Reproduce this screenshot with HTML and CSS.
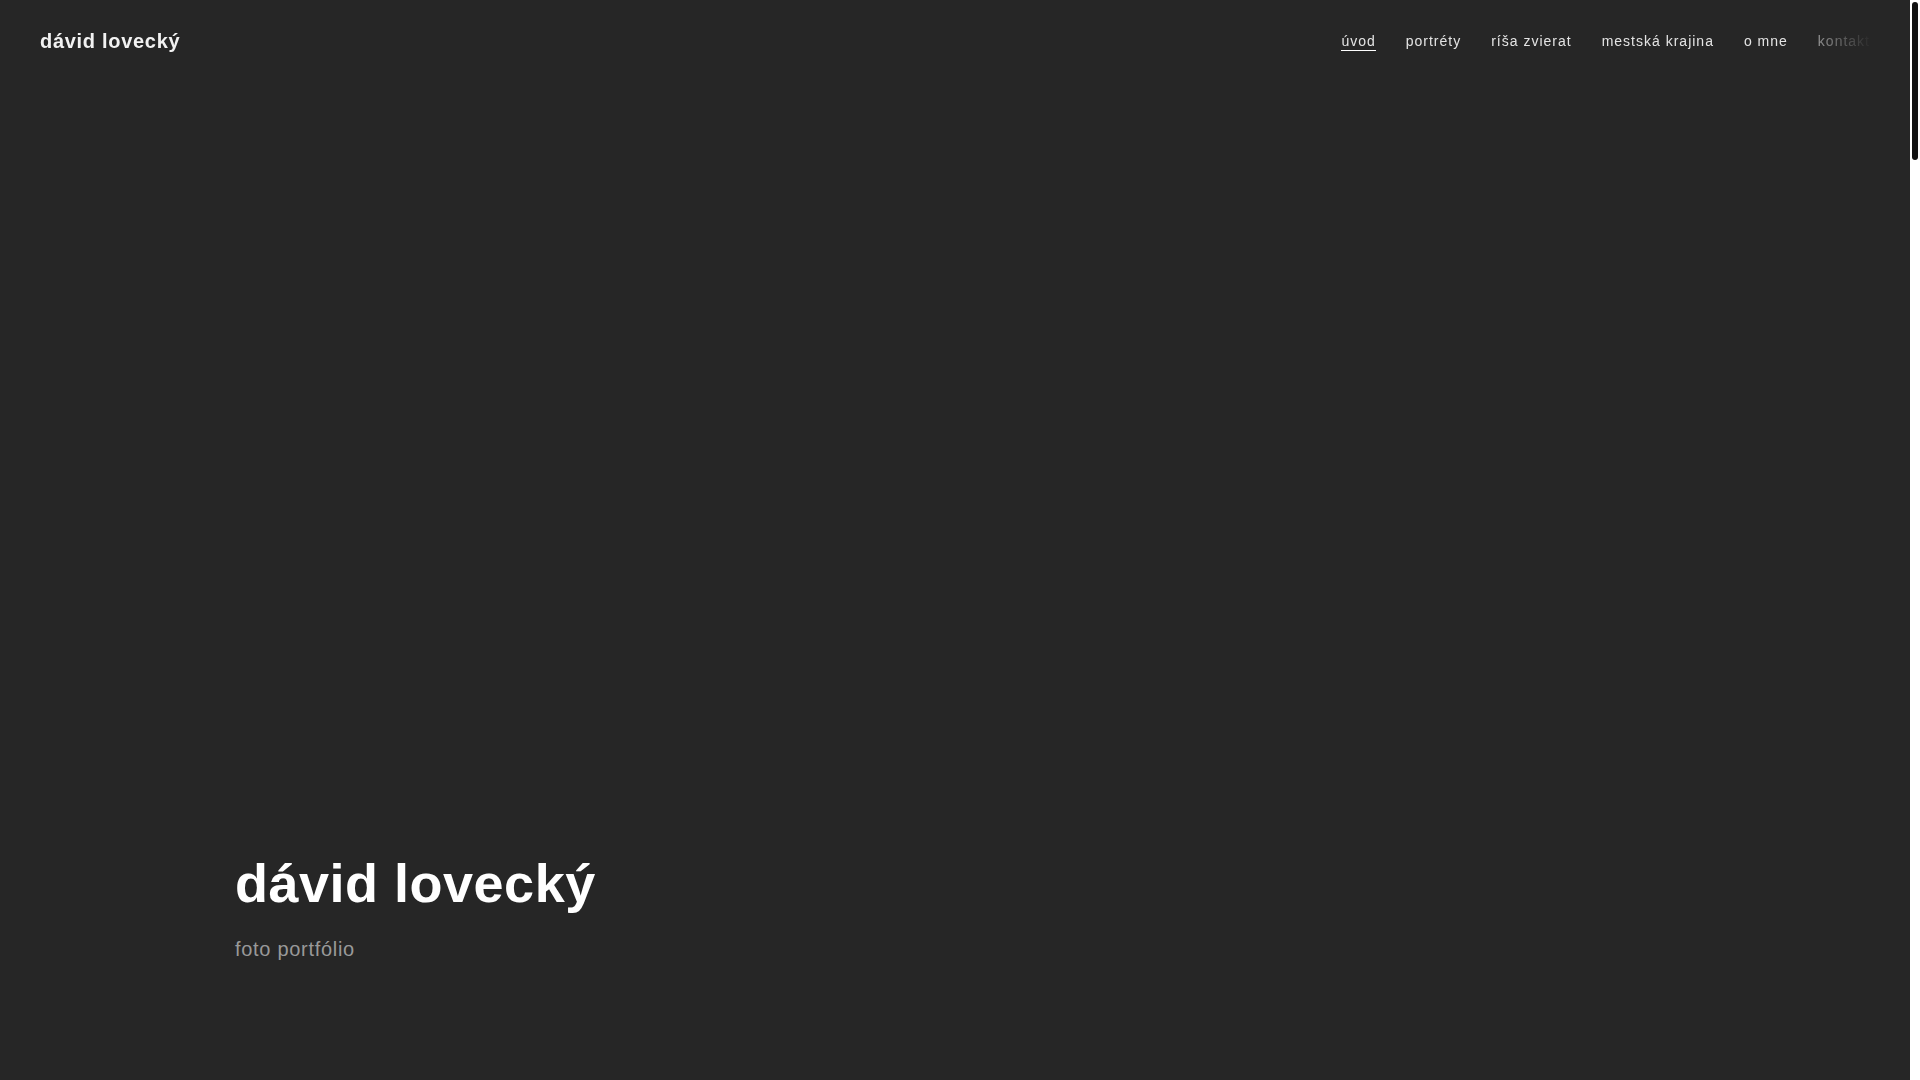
FILE: index.html
```html
<!DOCTYPE html>
<html lang="sk">
<head>
    <meta charset="UTF-8">
    <meta name="viewport" content="width=device-width, initial-scale=1.0">
    <title>dávid lovecký – foto portfólio</title>
    <link rel="stylesheet" href="styles.css">
</head>
<body>

<header class="site-header">
    <a class="logo" href="#">dávid lovecký</a>
    <nav class="main-nav">
        <a class="nav-link active" href="#">úvod</a>
        <a class="nav-link" href="#portrety">portréty</a>
        <a class="nav-link" href="#zvierata">ríša zvierat</a>
        <a class="nav-link" href="#mesto">mestská krajina</a>
        <a class="nav-link" href="#o-mne">o mne</a>
        <a class="nav-link fading" href="#kontakt">kontakt</a>
    </nav>
</header>

<div class="scrollbar"><div class="scrollbar-thumb"></div></div>

<section class="hero">
    <div class="hero-text">
        <h1>dávid lovecký</h1>
        <p class="subtitle">foto portfólio</p>
    </div>
</section>

<section class="gallery" id="portrety"></section>
<section class="gallery" id="zvierata"></section>
<section class="gallery" id="mesto"></section>
<section class="gallery" id="o-mne"></section>
<section class="gallery" id="kontakt"></section>

</body>
</html>
```
FILE: styles.css
```css
html {
    background-color: #262626;
    scrollbar-width: none;
}

::-webkit-scrollbar {
    display: none;
}

body {
    font-family: 'Liberation Sans', Arial, sans-serif;
    background-color: #262626;
    color: #eee;
    margin: 0;
    padding-right: 10px;
}

a {
    text-decoration: none;
    color: inherit;
}

.scrollbar {
    position: fixed;
    top: 0;
    right: 0;
    bottom: 0;
    width: 10px;
    background-color: #fff;
    z-index: 20;
}

.scrollbar-thumb {
    margin: 2px 2px 0 2px;
    height: 158px;
    background-color: #111;
    border-radius: 3px;
}

.site-header {
    position: fixed;
    top: 0;
    left: 0;
    right: 10px;
    display: flex;
    justify-content: space-between;
    align-items: flex-start;
    padding: 29px 40px 0 40px;
    z-index: 10;
}

.logo {
    font-size: 20px;
    font-weight: bold;
    letter-spacing: 0.7px;
    line-height: 1.2;
    color: #f2f2f2;
}

.main-nav {
    display: flex;
    gap: 30px;
    margin-top: 4px;
}

.nav-link {
    display: inline-block;
    font-size: 14px;
    letter-spacing: 1px;
    line-height: 1.2;
    color: #e4e4e4;
    border-bottom: 1px solid transparent;
}

.nav-link.active {
    border-bottom-color: #fff;
}

.nav-link.fading {
    -webkit-mask-image: linear-gradient(to right, rgba(0, 0, 0, 0.55), rgba(0, 0, 0, 0.05) 95%);
    mask-image: linear-gradient(to right, rgba(0, 0, 0, 0.55), rgba(0, 0, 0, 0.05) 95%);
}

.hero {
    height: 100vh;
    display: flex;
    align-items: flex-end;
    padding: 0 0 116px 235px;
    box-sizing: border-box;
}

.hero h1 {
    font-size: 54px;
    line-height: 1.1;
    letter-spacing: 0.5px;
    color: #fff;
    margin: 0 0 21px 0;
}

.subtitle {
    font-size: 20px;
    line-height: 1.5;
    letter-spacing: 0.7px;
    color: #999;
    margin: 0;
}

.gallery {
    height: 1250px;
}
```
